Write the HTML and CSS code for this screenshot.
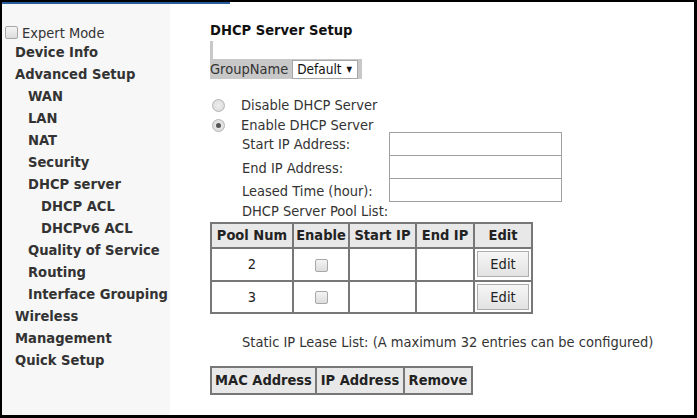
FILE: index.html
```html
<!DOCTYPE html>
<html>

<head>
    <meta charset="utf-8">
    <link rel="stylesheet" href="styles.css">
    <title>DHCP Server Setup</title>
</head>

<body>
    <div class="frame">
        <div class="topline"></div>
        <div class="main">
            <div class="sidebar">
                <div class="expert"><span class="chk"></span>Expert Mode</div>
                <div class="menu l1">Device Info</div>
                <div class="menu l1">Advanced Setup</div>
                <div class="menu l2">WAN</div>
                <div class="menu l2">LAN</div>
                <div class="menu l2">NAT</div>
                <div class="menu l2">Security</div>
                <div class="menu l2">DHCP server</div>
                <div class="menu l3">DHCP ACL</div>
                <div class="menu l3">DHCPv6 ACL</div>
                <div class="menu l2">Quality of Service</div>
                <div class="menu l2">Routing</div>
                <div class="menu l2">Interface Grouping</div>
                <div class="menu l1">Wireless</div>
                <div class="menu l1">Management</div>
                <div class="menu l1">Quick Setup</div>
            </div>

            <div class="content">
                <div class="title">DHCP Server Setup</div>
                <div class="groupbox">
                    <div class="groupstub"></div>
                    <div class="grouprow">
                        <span>GroupName</span>
                        <span class="select">Default <span class="arrow">&#9660;</span></span>
                    </div>
                </div>

                <div class="radios">
                    <div class="radiorow"><span class="radio"></span>Disable DHCP Server</div>
                    <div class="radiorow"><span class="radio on"></span>Enable DHCP Server</div>
                </div>

                <div class="fields">
                    <div class="labels">
                        <div>Start IP Address:</div>
                        <div>End IP Address:</div>
                        <div>Leased Time (hour):</div>
                    </div>
                    <div class="inputs">
                        <div class="input"></div>
                        <div class="input"></div>
                        <div class="input"></div>
                    </div>
                </div>
                <div class="poollabel">DHCP Server Pool List:</div>

                <table class="grid pool">
                    <tr>
                        <th class="c1">Pool Num</th>
                        <th class="c2">Enable</th>
                        <th class="c3">Start IP</th>
                        <th class="c4">End IP</th>
                        <th class="c5">Edit</th>
                    </tr>
                    <tr class="r1">
                        <td>2</td>
                        <td><span class="chk"></span></td>
                        <td></td>
                        <td></td>
                        <td><span class="btn">Edit</span></td>
                    </tr>
                    <tr class="r2">
                        <td>3</td>
                        <td><span class="chk"></span></td>
                        <td></td>
                        <td></td>
                        <td><span class="btn">Edit</span></td>
                    </tr>
                </table>

                <div class="lease">Static IP Lease List: (A maximum 32 entries can be configured)</div>

                <table class="grid static">
                    <tr>
                        <th class="m1">MAC Address</th>
                        <th class="m2">IP Address</th>
                        <th class="m3">Remove</th>
                    </tr>
                </table>
            </div>
        </div>
    </div>
</body>

</html>
```

FILE: styles.css
```css
html,
body {
    margin: 0;
    padding: 0;
    background: #000;
}

body {
    font-family: "DejaVu Sans Condensed", "DejaVu Sans", sans-serif;
    font-size: 14.5px;
    color: #222;
}

.frame {
    width: 697px;
    height: 418px;
    box-sizing: border-box;
    border-top: 2px solid #000;
    border-left: 2px solid #000;
    border-right: 3px solid #000;
    border-bottom: 3px solid #000;
    background: #fff;
    display: flex;
    flex-direction: column;
    overflow: hidden;
}

.topline {
    width: 228px;
    height: 2px;
    background: #2b5c9c;
    flex: none;
}

.main {
    display: flex;
    flex: 1;
}

/* left menu */
.sidebar {
    width: 168px;
    background: #f7f7f7;
    padding-top: 20px;
    box-sizing: border-box;
    flex: none;
}

.expert {
    display: flex;
    align-items: center;
    height: 17px;
    padding-left: 3px;
    font-size: 14.5px;
    color: #333;
}

.expert .chk {
    margin-right: 4px;
}

.chk {
    display: inline-block;
    width: 11px;
    height: 11px;
    border: 1px solid #a8a8a8;
    border-radius: 2px;
    background: linear-gradient(#f4f4f4, #dcdcdc);
    vertical-align: middle;
}

.menu {
    height: 22px;
    line-height: 22px;
    font-weight: bold;
    font-size: 14.6px;
    color: #333;
    white-space: nowrap;
}

.l1 { padding-left: 13px; }
.l2 { padding-left: 26px; }
.l3 { padding-left: 39px; }

/* main panel */
.content {
    padding-left: 40px;
    flex: 1;
}

.title {
    font-weight: bold;
    font-size: 14.6px;
    color: #111;
    margin-top: 16px;
    height: 20px;
    line-height: 20px;
}

.groupbox {
    margin-top: 1px;
}

.groupstub {
    width: 3px;
    height: 18px;
    background: #c8c8c8;
}

.grouprow {
    display: flex;
    align-items: center;
    gap: 4px;
    width: 152px;
    height: 20px;
    background: #c8c8c8;
    color: #333;
}

.select {
    display: inline-flex;
    align-items: center;
    height: 17px;
    padding: 0 5px 0 4px;
    background: #fff;
    border: 1px solid #a8a8a8;
    font-size: 13.5px;
    color: #111;
}

.arrow {
    font-size: 8px;
    margin-left: 5px;
}

.radios {
    margin-top: 16px;
    padding-left: 1px;
}

.radiorow {
    display: flex;
    align-items: center;
    height: 20px;
    color: #333;
}

.radio {
    display: inline-block;
    width: 11px;
    height: 11px;
    border: 1px solid #b4b4b4;
    border-radius: 50%;
    background: radial-gradient(circle, #eee, #d8d8d8);
    margin-right: 16px;
    margin-left: 1px;
    position: relative;
}

.radio.on::after {
    content: "";
    position: absolute;
    left: 3px;
    top: 3px;
    width: 5px;
    height: 5px;
    border-radius: 50%;
    background: #555;
}

.fields {
    display: flex;
    margin-top: -3px;
}

.labels {
    padding-left: 32px;
    width: 179px;
    box-sizing: border-box;
    padding-top: 1px;
    color: #333;
}

.labels div {
    height: 23.5px;
    line-height: 23.5px;
}

.inputs {
    display: flex;
    flex-direction: column;
}

.input {
    width: 171px;
    height: 22px;
    border: 1px solid #a0a0a0;
    background: #fff;
    margin-top: -1px;
}

.input:first-child {
    margin-top: 0;
}

.poollabel {
    padding-left: 32px;
    height: 18px;
    line-height: 15px;
    color: #333;
}

.grid {
    border-collapse: collapse;
    border: 2px solid #666;
    color: #222;
}

.grid th,
.grid td {
    border: 2px solid #777;
    padding: 0;
    text-align: center;
}

.grid th {
    background: #e8e8e8;
    font-weight: bold;
    font-size: 14.5px;
    height: 23px;
}

.pool .c1 { width: 80px; }
.pool .c2 { width: 54px; }
.pool .c3 { width: 65px; }
.pool .c4 { width: 56px; }
.pool .c5 { width: 56px; }

.pool .r1 td { height: 31px; }
.pool .r2 td { height: 30px; }

.btn {
    display: inline-block;
    width: 50px;
    height: 24px;
    line-height: 24px;
    border: 1px solid #adadad;
    background: linear-gradient(#f6f6f6, #e2e2e2);
    font-size: 14.5px;
    color: #222;
}

.lease {
    margin-top: 20px;
    padding-left: 32px;
    color: #333;
}

.static {
    margin-top: 16px;
}

.static th {
    height: 25px;
}

.static .m1 { width: 103px; }
.static .m2 { width: 86px; }
.static .m3 { width: 66px; }
```
